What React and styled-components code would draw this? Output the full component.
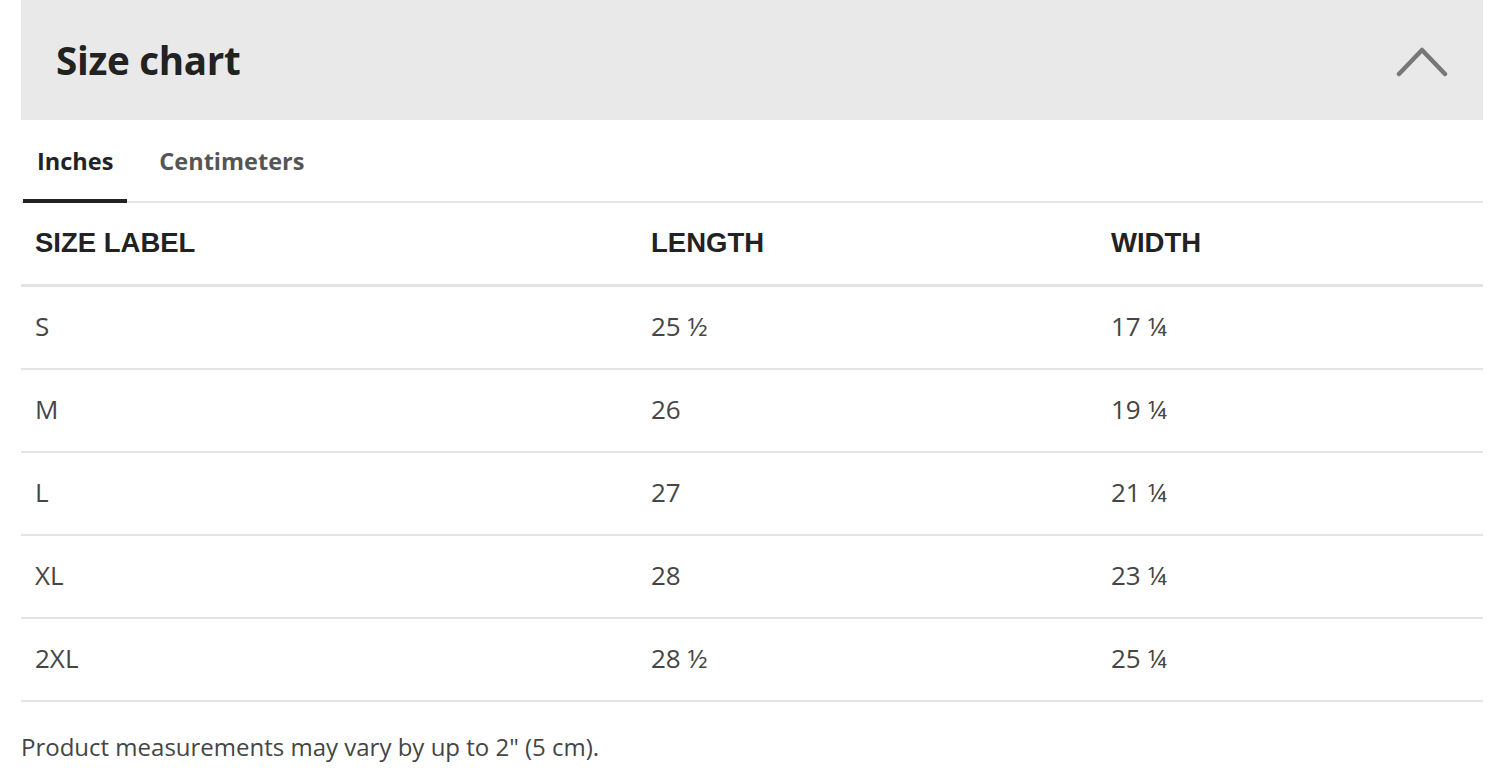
import React, { useState } from 'react'
import styled, { createGlobalStyle } from 'styled-components'

const GlobalStyle = createGlobalStyle`
  html, body {
    margin: 0;
    padding: 0;
    background: #ffffff;
  }
  body {
    font-family: 'Open Sans', 'Liberation Sans', sans-serif;
  }
`

const Panel = styled.section`
  margin: 0 17px 0 21px;
  width: 1462px;
`

const Header = styled.div`
  display: flex;
  justify-content: space-between;
  align-items: center;
  height: 120px;
  padding: 0 35px;
  box-sizing: border-box;
  background: #e9e9e9;
`

const Title = styled.h2`
  margin: 0;
  font-family: 'Open Sans', sans-serif;
  font-weight: 700;
  font-size: 38.6px;
  letter-spacing: -0.3px;
  color: #222222;
`

const Chevron = styled.svg`
  width: 52px;
  height: 32px;
  margin-top: 2px;
`

const Tabs = styled.div`
  display: flex;
  gap: 18px;
  height: 81px;
  border-bottom: 2px solid #e6e6e6;
  padding-left: 2px;
`

const Tab = styled.button`
  display: flex;
  align-items: center;
  padding: 3px 14px 0;
  border: none;
  background: none;
  font-family: 'Open Sans', sans-serif;
  font-weight: 700;
  font-size: 23.5px;
  color: ${p => (p.$active ? '#222222' : '#555555')};
  border-bottom: 4px solid ${p => (p.$active ? '#222222' : 'transparent')};
  margin-bottom: -2px;
  cursor: pointer;
`

const Table = styled.table`
  width: 100%;
  border-collapse: collapse;
  table-layout: fixed;
`

const HeadCell = styled.th`
  height: 79px;
  padding: 0 14px 2px;
  text-align: left;
  font-family: 'Liberation Sans', Arial, sans-serif;
  font-weight: 700;
  font-size: 27.5px;
  color: #222222;
  border-bottom: 3px solid #e3e3e3;
`

const Cell = styled.td`
  height: 78px;
  padding: 0 14px 3px;
  font-family: 'Open Sans', sans-serif;
  font-size: 26px;
  color: #454545;
  border-bottom: 2px solid #e4e4e4;
`

const Note = styled.p`
  margin: 28px 0 0;
  font-family: 'Open Sans', sans-serif;
  font-size: 24px;
  color: #454545;
`

const rows = {
  Inches: [
    ['S', '25 ½', '17 ¼'],
    ['M', '26', '19 ¼'],
    ['L', '27', '21 ¼'],
    ['XL', '28', '23 ¼'],
    ['2XL', '28 ½', '25 ¼'],
  ],
  Centimeters: [
    ['S', '64.8', '43.8'],
    ['M', '66', '48.9'],
    ['L', '68.6', '54'],
    ['XL', '71.1', '59.1'],
    ['2XL', '72.4', '64.1'],
  ],
}

export default function App() {
  const [unit, setUnit] = useState('Inches')

  return (
    <>
      <GlobalStyle />
      <Panel>
        <Header>
          <Title>Size chart</Title>
          <Chevron viewBox="0 0 52 32" fill="none">
            <path d="M3 29 L26 5 L49 29" stroke="#777777" strokeWidth="4.5" strokeLinecap="round" strokeLinejoin="round" />
          </Chevron>
        </Header>
        <Tabs>
          {['Inches', 'Centimeters'].map(t => (
            <Tab key={t} $active={unit === t} onClick={() => setUnit(t)}>{t}</Tab>
          ))}
        </Tabs>
        <Table>
          <colgroup>
            <col style={{ width: 616 }} />
            <col style={{ width: 460 }} />
            <col />
          </colgroup>
          <thead>
            <tr>
              <HeadCell>SIZE LABEL</HeadCell>
              <HeadCell>LENGTH</HeadCell>
              <HeadCell>WIDTH</HeadCell>
            </tr>
          </thead>
          <tbody>
            {rows[unit].map(r => (
              <tr key={r[0]}>
                {r.map((v, i) => <Cell key={i}>{v}</Cell>)}
              </tr>
            ))}
          </tbody>
        </Table>
        <Note>Product measurements may vary by up to 2" (5 cm).</Note>
      </Panel>
    </>
  )
}
